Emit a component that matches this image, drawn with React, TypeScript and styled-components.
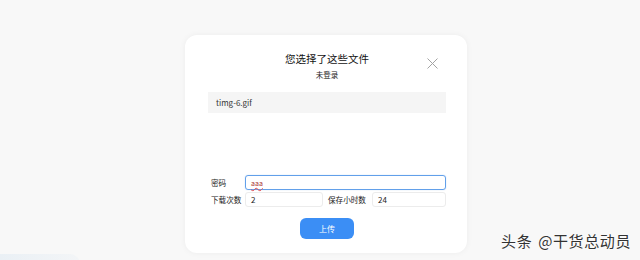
import React from 'react';
import styled, { createGlobalStyle } from 'styled-components';

const GlobalStyle = createGlobalStyle`
  html, body {
    margin: 0;
    padding: 0;
    background: #f8f8f8;
  }
  body {
    font-family: "Noto Sans CJK SC", "Noto Sans", sans-serif;
    color: #222;
  }
`;

const Page = styled.div`
  position: relative;
  width: 640px;
  height: 260px;
  overflow: hidden;
  padding: 35px 0 0 185px;
  box-sizing: border-box;
`;

const Dialog = styled.div`
  width: 282px;
  height: 218px;
  box-sizing: border-box;
  background: #fff;
  border-radius: 12px;
  box-shadow: 0 0 6px rgba(0, 0, 0, 0.05);
  padding: 17px 21px 0 23px;
  display: flex;
  flex-direction: column;
`;

const Header = styled.div`
  display: grid;
  grid-template-columns: 1fr auto 1fr;
`;

const TitleBlock = styled.div`
  grid-column: 2;
  display: flex;
  flex-direction: column;
  align-items: center;
`;

const Title = styled.div`
  font-size: 10.5px;
  line-height: 14px;
  color: #111;
`;

const Subtitle = styled.div`
  margin-top: 4px;
  font-size: 7.5px;
  line-height: 10px;
  color: #222;
`;

const CloseButton = styled.button`
  grid-column: 3;
  justify-self: end;
  align-self: start;
  margin: 6px 8px 0 0;
  width: 11px;
  height: 11px;
  padding: 0;
  border: none;
  background: none;
  display: flex;
  cursor: pointer;
`;

const FileList = styled.div`
  margin-top: 12px;
  height: 21px;
  background: #f5f5f5;
  display: flex;
  align-items: center;
  padding-left: 8px;
  font-size: 8px;
  color: #333;
`;

const Form = styled.div`
  margin-top: 62px;
  display: grid;
  grid-template-columns: 37px 78px 49px 1fr;
  row-gap: 2px;
  align-items: center;
`;

const Label = styled.label<{ $indent?: number }>`
  font-size: 7.6px;
  color: #222;
  padding-left: ${p => p.$indent ?? 3}px;
  white-space: nowrap;
`;

const Field = styled.div<{ $focused?: boolean; $span?: number }>`
  grid-column: span ${p => p.$span ?? 1};
  height: 15px;
  box-sizing: border-box;
  border: 1px solid ${p => (p.$focused ? '#62a0ea' : '#ececec')};
  border-radius: 3px;
  box-shadow: ${p => (p.$focused ? '0 0 1px rgba(74,144,226,0.5)' : 'none')};
  display: flex;
  align-items: center;
  padding-left: 5px;
  font-size: 8px;
  color: #222;
`;

const Misspelled = styled.span`
  font-size: 7px;
  color: #a33;
  text-decoration: underline wavy #e0474c;
  text-decoration-thickness: 0.5px;
  text-underline-offset: 1px;
`;

const Footer = styled.div`
  margin-top: 11px;
  display: flex;
  justify-content: center;
`;

const UploadButton = styled.button`
  width: 54px;
  height: 21px;
  border: none;
  border-radius: 6px;
  background: #3b8ef5;
  color: #fff;
  font-family: "Noto Sans CJK SC", sans-serif;
  font-size: 8px;
  cursor: pointer;
`;

const Watermark = styled.div`
  position: absolute;
  right: 9px;
  bottom: 11px;
  font-family: "Noto Sans CJK SC", sans-serif;
  font-size: 15px;
  line-height: 16px;
  letter-spacing: 0.6px;
  word-spacing: 2px;
  color: #333;
  text-shadow: 0 0 2px #fff;
`;

const CornerGlow = styled.div`
  position: absolute;
  left: 0;
  bottom: -8px;
  width: 80px;
  height: 14px;
  border-radius: 0 10px 0 0;
  background: linear-gradient(90deg, #eaf0f5, #f3f5f7);
`;

const CloseIcon = () => (
  <svg width="11" height="11" viewBox="0 0 11 11">
    <path d="M0.5 0.5 L10.5 10.5 M10.5 0.5 L0.5 10.5" stroke="#a3a3a3" strokeWidth="1" fill="none" />
  </svg>
);

const App = () => (
  <>
    <GlobalStyle />
    <Page>
      <Dialog>
        <Header>
          <TitleBlock>
            <Title>您选择了这些文件</Title>
            <Subtitle>未登录</Subtitle>
          </TitleBlock>
          <CloseButton aria-label="close">
            <CloseIcon />
          </CloseButton>
        </Header>
        <FileList>timg-6.gif</FileList>
        <Form>
          <Label>密码</Label>
          <Field $focused $span={3}>
            <Misspelled>aaa</Misspelled>
          </Field>
          <Label>下载次数</Label>
          <Field>2</Field>
          <Label $indent={5}>保存小时数</Label>
          <Field>24</Field>
        </Form>
        <Footer>
          <UploadButton>上传</UploadButton>
        </Footer>
      </Dialog>
      <CornerGlow />
      <Watermark>头条 @干货总动员</Watermark>
    </Page>
  </>
);

export default App;
